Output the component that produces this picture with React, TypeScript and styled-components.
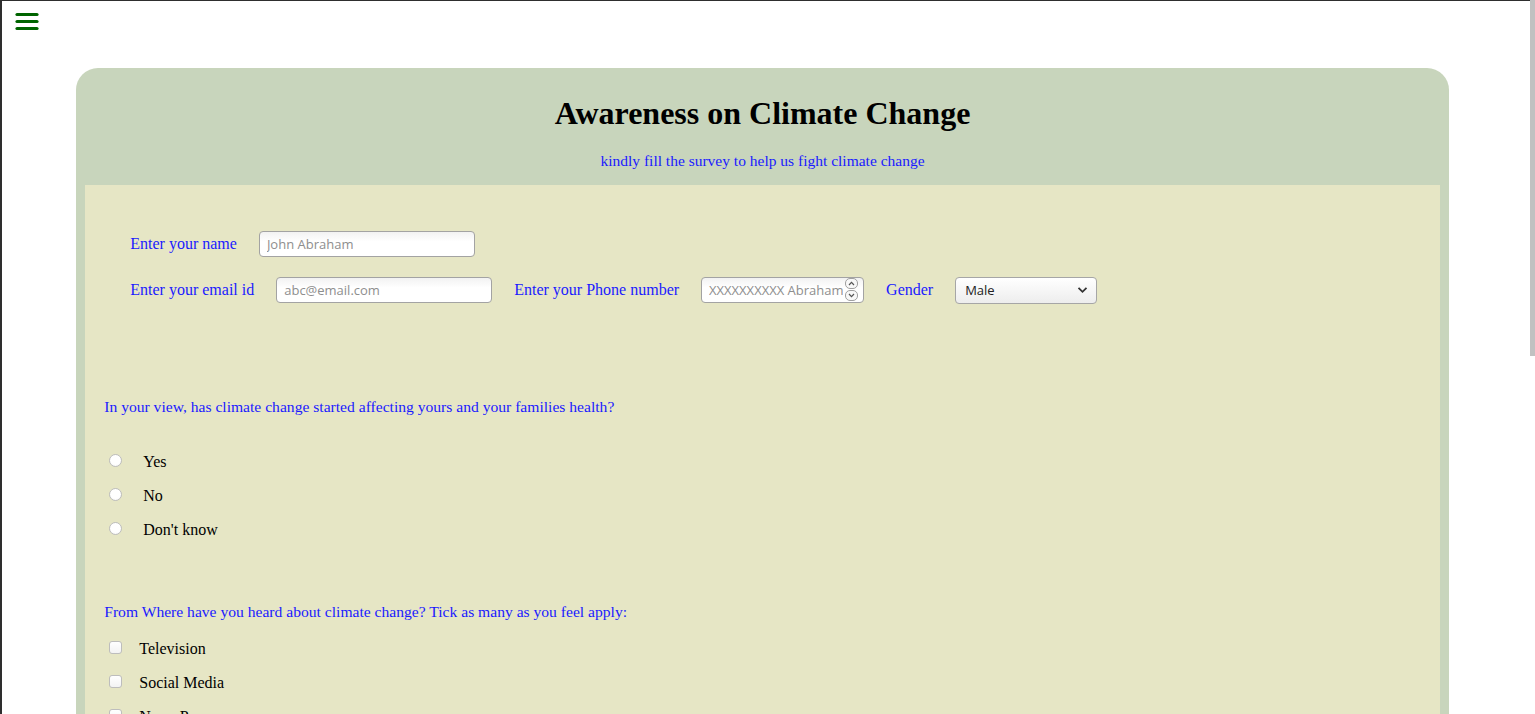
import React from "react";
import styled, { createGlobalStyle } from "styled-components";

const Global = createGlobalStyle`
  html {
    min-height: 100%;
    background: #ffffff;
    box-shadow: inset 2px 1px 0 #2e2e2e;
  }
  body {
    margin: 0;
    padding-right: 10px;
    font-family: "Liberation Serif", "Times New Roman", serif;
    color: #000;
  }
  * { box-sizing: border-box; }
`;

const ScrollThumb = styled.div`
  position: fixed;
  top: 0;
  right: 0;
  width: 5px;
  height: 356px;
  background: #c1c1c1;
`;

const TopBar = styled.nav`
  height: 68px;
  padding: 12px 0 0 15px;
`;

const MenuButton = styled.button`
  display: block;
  width: 24px;
  height: 19px;
  padding: 0;
  border: none;
  background: transparent;
  cursor: pointer;
`;

const Survey = styled.main`
  width: 90%;
  margin: 0 auto;
  background: #c8d5bc;
  border-radius: 22px 22px 0 0;
  padding: 0 9px;
`;

const Header = styled.header`
  height: 117px;
  padding-top: 27px;
  text-align: center;
`;

const Title = styled.h1`
  margin: 0;
  font-size: 32px;
  line-height: 36px;
  font-weight: 700;
`;

const Subtitle = styled.p`
  margin: 21px 0 0;
  font-size: 15.5px;
  line-height: 18px;
  color: #1a1aff;
`;

const Panel = styled.form`
  background: #e6e6c5;
  padding: 46px 0 186px;
`;

const FieldRow = styled.div<{ $gapTop?: number }>`
  display: flex;
  align-items: center;
  height: 26px;
  padding-left: 45px;
  margin-top: ${(p) => p.$gapTop ?? 0}px;
`;

const Label = styled.label`
  font-size: 16px;
  color: #1a1aff;
  margin-right: 22px;
  white-space: nowrap;
`;

const TextInput = styled.input<{ $w: number }>`
  width: ${(p) => p.$w}px;
  height: 26px;
  margin-right: 22px;
  padding: 0 7px;
  border: 1px solid #a3a3a3;
  border-radius: 4px;
  background: linear-gradient(to bottom, #f2f2f2, #ffffff 40%);
  font-family: "Open Sans", "Noto Sans", sans-serif;
  font-size: 13px;
  color: #333;
  outline: none;
  &::placeholder { color: #8e8e8e; }
  &::-webkit-outer-spin-button,
  &::-webkit-inner-spin-button { -webkit-appearance: none; margin: 0; }
`;

const NumberWrap = styled.div`
  position: relative;
  height: 26px;
  margin-right: 22px;
  & > input { margin-right: 0; padding-right: 20px; }
`;

const Spinner = styled.div`
  position: absolute;
  right: 6px;
  top: 1px;
  display: flex;
  flex-direction: column;
  gap: 1px;
`;

const SpinBtn = styled.span`
  display: flex;
  align-items: center;
  justify-content: center;
  width: 13px;
  height: 11px;
  border: 1px solid #a0a0a0;
  border-radius: 5px;
  background: #f8f8f8;
`;

const SelectWrap = styled.div`
  position: relative;
  width: 142px;
  height: 27px;
`;

const Select = styled.select`
  width: 100%;
  height: 100%;
  appearance: none;
  -webkit-appearance: none;
  padding: 0 9px;
  border: 1px solid #a6a6a6;
  border-radius: 4px;
  background: linear-gradient(to bottom, #ffffff, #ededed);
  font-family: "Open Sans", "Noto Sans", sans-serif;
  font-size: 13px;
  color: #222;
  outline: none;
`;

const Chevron = styled.svg`
  position: absolute;
  right: 9px;
  top: 9px;
  pointer-events: none;
`;

const Question = styled.p<{ $top: number }>`
  margin: ${(p) => p.$top}px 0 0;
  padding-left: 19px;
  font-size: 15.6px;
  line-height: 18px;
  color: #1a1aff;
`;

const Options = styled.div<{ $top: number }>`
  margin-top: ${(p) => p.$top}px;
  padding-left: 24px;
`;

const Option = styled.label<{ $gap: number }>`
  display: flex;
  align-items: center;
  height: 34px;
  gap: ${(p) => p.$gap}px;
  font-size: 16px;
`;

const Radio = styled.input.attrs({ type: "radio" })`
  appearance: none;
  -webkit-appearance: none;
  margin: -4px 0 0 0;
  width: 13px;
  height: 13px;
  border: 1px solid #bdbdbd;
  border-radius: 50%;
  background: radial-gradient(circle at 50% 40%, #ffffff 55%, #f1f1f1);
`;

const Check = styled.input.attrs({ type: "checkbox" })`
  appearance: none;
  -webkit-appearance: none;
  margin: -4px 0 0 0;
  width: 13px;
  height: 13px;
  border: 1px solid #bdbdbd;
  border-radius: 3px;
  background: linear-gradient(to bottom, #ffffff, #f3f3f3);
`;

const TextArea = styled.textarea`
  display: block;
  margin: 14px 0 0 24px;
  width: 420px;
  height: 90px;
  border: 1px solid #a3a3a3;
  border-radius: 4px;
  font-family: "Open Sans", "Noto Sans", sans-serif;
  font-size: 13px;
  padding: 6px 8px;
`;

const Submit = styled.button`
  display: block;
  margin: 30px 0 0 24px;
  padding: 6px 22px;
  border: 1px solid #5f7f4f;
  border-radius: 4px;
  background: #006400;
  color: #fff;
  font-family: "Liberation Serif", serif;
  font-size: 16px;
`;

const radioOptions = ["Yes", "No", "Don't know"];
const sources = ["Television", "Social Media", "News Paper", "Friends and Family", "School / College"];
const actions = ["Planting trees", "Saving electricity", "Using public transport", "Reducing plastic use"];

export default function App() {
  return (
    <>
      <Global />
      <ScrollThumb />
      <TopBar>
        <MenuButton aria-label="menu">
          <svg width="24" height="19" viewBox="0 0 24 19">
            <g stroke="#006400" strokeWidth="3.2" strokeLinecap="round">
              <line x1="2" y1="2.5" x2="22" y2="2.5" />
              <line x1="2" y1="9.5" x2="22" y2="9.5" />
              <line x1="2" y1="16.5" x2="22" y2="16.5" />
            </g>
          </svg>
        </MenuButton>
      </TopBar>
      <Survey>
        <Header>
          <Title>Awareness on Climate Change</Title>
          <Subtitle>kindly fill the survey to help us fight climate change</Subtitle>
        </Header>
        <Panel onSubmit={(e) => e.preventDefault()}>
          <FieldRow>
            <Label htmlFor="name">Enter your name</Label>
            <TextInput id="name" $w={216} placeholder="John Abraham" />
          </FieldRow>
          <FieldRow $gapTop={20}>
            <Label htmlFor="email">Enter your email id</Label>
            <TextInput id="email" $w={216} placeholder="abc@email.com" />
            <Label htmlFor="phone">Enter your Phone number</Label>
            <NumberWrap>
              <TextInput id="phone" type="number" $w={163} placeholder="XXXXXXXXXX Abraham" />
              <Spinner>
                <SpinBtn>
                  <svg width="7" height="5" viewBox="0 0 7 5">
                    <polyline points="1,4 3.5,1.3 6,4" fill="none" stroke="#555" strokeWidth="1.2" />
                  </svg>
                </SpinBtn>
                <SpinBtn>
                  <svg width="7" height="5" viewBox="0 0 7 5">
                    <polyline points="1,1 3.5,3.7 6,1" fill="none" stroke="#555" strokeWidth="1.2" />
                  </svg>
                </SpinBtn>
              </Spinner>
            </NumberWrap>
            <Label htmlFor="gender">Gender</Label>
            <SelectWrap>
              <Select id="gender" defaultValue="Male">
                <option>Male</option>
                <option>Female</option>
                <option>Other</option>
              </Select>
              <Chevron width="11" height="8" viewBox="0 0 11 8">
                <polyline points="1.5,1.8 5.5,5.8 9.5,1.8" fill="none" stroke="#333" strokeWidth="1.8" />
              </Chevron>
            </SelectWrap>
          </FieldRow>

          <Question $top={95}>
            In your view, has climate change started affecting yours and your families health?
          </Question>
          <Options $top={29}>
            {radioOptions.map((o) => (
              <Option key={o} $gap={21}>
                <Radio name="health" value={o} />
                {o}
              </Option>
            ))}
          </Options>

          <Question $top={56}>
            From Where have you heard about climate change? Tick as many as you feel apply:
          </Question>
          <Options $top={11}>
            {sources.map((o) => (
              <Option key={o} $gap={17}>
                <Check value={o} />
                {o}
              </Option>
            ))}
          </Options>

          <Question $top={50}>
            What steps are you taking to reduce your carbon footprint?
          </Question>
          <Options $top={8}>
            {actions.map((o) => (
              <Option key={o} $gap={17}>
                <Check value={o} />
                {o}
              </Option>
            ))}
          </Options>

          <Question $top={50}>Any suggestions to fight climate change?</Question>
          <TextArea placeholder="Write your suggestions here" />
          <Submit type="submit">Submit</Submit>
        </Panel>
      </Survey>
    </>
  );
}
